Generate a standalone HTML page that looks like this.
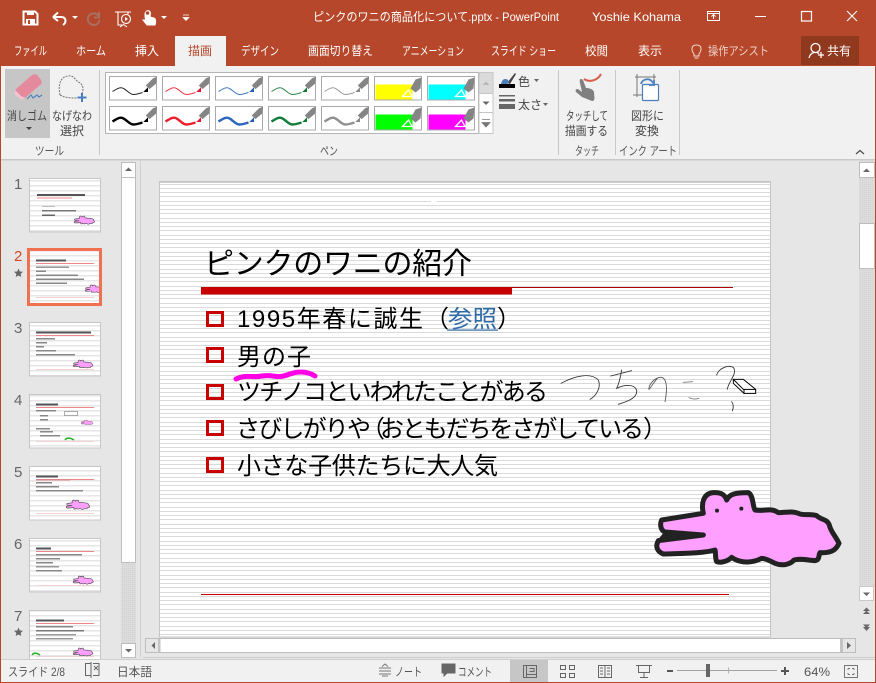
<!DOCTYPE html>
<html lang="ja"><head><meta charset="utf-8"><title>PowerPoint</title>
<style>
html,body{margin:0;padding:0;width:876px;height:683px;overflow:hidden;background:#e6e6e6}
svg{display:block}
text{font-family:"Liberation Sans","Noto Sans CJK JP",sans-serif;white-space:pre}
.w{fill:#fff;font-size:12px}
.r{fill:#444;font-size:12px}
.s{fill:#555;font-size:12px}
.n{fill:#666;font-size:15px}
.b{fill:#000;font-size:24px}
</style></head><body>
<svg width="876" height="683" viewBox="0 0 876 683" xmlns="http://www.w3.org/2000/svg">
<defs>
<pattern id="st" width="6" height="17" patternUnits="userSpaceOnUse" y="184"><rect width="6" height="17" fill="#fff"/><rect y="0" width="6" height="1" fill="#dadada"/><rect y="4" width="6" height="1" fill="#dadada"/><rect y="8" width="6" height="1" fill="#dadada"/><rect y="12" width="6" height="1" fill="#dadada"/></pattern>
<pattern id="st2" width="4" height="5" patternUnits="userSpaceOnUse"><rect width="4" height="5" fill="#fff"/><rect width="4" height="1.500" fill="#e6e6e6"/></pattern>
<pattern id="dit" width="2" height="2" patternUnits="userSpaceOnUse"><rect width="2" height="2" fill="#dcdcdc"/><rect width="1" height="1" fill="#d2d2d2"/></pattern>
<clipPath id="c2"><rect x="30" y="251" width="69" height="52"/></clipPath>
<g id="body"><path d="M37 9L44 2L47 1L46 7L40 12Z" fill="#858585" stroke="#858585"/></g>
<g id="hbody"><path d="M36 12L41 3L47 1L46 12L41 16Z" fill="#858585"/></g>
<rect id="cell" width="47" height="23.500" fill="#fff" stroke="#a9a9a9" x="0" y="0"/>
<path id="wave" d="M3 15C8 12 11 10 14 12C18 14 20 18 24 18C27 18 30 17 33 16" fill="none"/>
<path id="croc" d="M365 510L490 490C483 460 490 430 520 428C545 426 555 435 560 450C568 432 585 428 625 428C640 435 638 470 645 480C670 485 695 472 715 488C740 488 755 482 775 490C790 498 815 490 830 497C845 512 860 505 868 525C872 545 885 555 897 580C890 595 880 610 840 608C835 615 840 630 825 632C800 630 780 625 762 630C750 645 725 648 705 640C690 632 675 625 665 625C640 638 610 640 585 628L575 622C565 632 545 640 530 635C525 625 528 610 525 600C490 610 430 610 370 612C352 605 345 590 355 572L490 555L375 546C360 540 360 520 365 510Z"/>
</defs>

<!-- base -->
<rect width="876" height="683" fill="#e6e6e6"/>
<rect width="876" height="66" fill="#b7472a"/>
<rect x="0" y="66" width="876" height="93" fill="#f1f1f1"/>
<rect x="0" y="159" width="876" height="1.500" fill="#c9c9c9"/>

<!-- QAT -->
<g>
<path d="M23.500 11.500H35L37.500 14V24.500H23.500Z" fill="none" stroke="#fff" stroke-width="2"/>
<rect x="27" y="11" width="7" height="4" fill="#fff"/><rect x="26" y="19" width="9" height="6" fill="#fff"/><rect x="28" y="20" width="2" height="4" fill="#b7472a"/>
<path d="M53 17L58 12.500M53 17L58 21M53 17H61C66 17 67 22 63 25" fill="none" stroke="#fff" stroke-width="2"/>
<path d="M72 16H78L75 19Z" fill="#fff"/>
<path d="M99 12V17.500H94M98 15.500C95 12 89 13 88 18C87 22 91 25 94 25C97 25 99 23 99.500 20" fill="none" stroke="#a8705f" stroke-width="2"/>
<path d="M115 12H131M118 12V25H122M128 12V14" stroke="#fff" stroke-width="1.100" fill="none"/><circle cx="126" cy="19" r="4.500" fill="none" stroke="#fff" stroke-width="1.100"/><path d="M125 17L128 19L125 21Z" fill="#fff"/><path d="M120 27L123.500 24.500L127 27" stroke="#fff" fill="none"/>
<path d="M145 16C144 10 150 9 150.500 13L150 17L154 18C156 19 156 22 155 25H147L143 20L145.500 20Z" fill="#fff" stroke="#fff"/><circle cx="147.500" cy="13" r="1.800" fill="#b7472a"/>
<path d="M161 16H167L164 19Z" fill="#fff"/>
<path d="M183 15H189M183 17.500H189L186 20.500Z" fill="#fff" stroke="#fff" stroke-width=".7"/>
</g>
<text class="w" x="313" y="21" textLength="246" lengthAdjust="spacingAndGlyphs">ピンクのワニの商品化について.pptx - PowerPoint</text>
<text class="w" x="592" y="21" textLength="89" lengthAdjust="spacingAndGlyphs">Yoshie Kohama</text>
<g fill="none" stroke="#fff">
<rect x="707.500" y="11.500" width="12" height="9"/><path d="M707 13.500H720M713.500 19V15M711.500 16.500L713.500 14.500L715.500 16.500"/>
<path d="M755 16.500H766"/><rect x="801.500" y="11.500" width="10" height="9.500" stroke-width="1.200"/><path d="M847 11L857 21M857 11L847 21" stroke-width="1.100"/>
</g>

<!-- Tabs -->
<rect x="175" y="36" width="51" height="30" fill="#f1f1f1"/>
<rect x="801" y="36" width="58" height="29" fill="#90391f"/>
<g class="tabs">
<text class="w" x="14" y="55" textLength="33" lengthAdjust="spacingAndGlyphs">ファイル</text>
<text class="w" x="76" y="55" textLength="30" lengthAdjust="spacingAndGlyphs">ホーム</text>
<text class="w" x="135" y="55" textLength="24" lengthAdjust="spacingAndGlyphs">挿入</text>
<text x="188" y="55" font-size="12" fill="#b7472a" textLength="24" lengthAdjust="spacingAndGlyphs">描画</text>
<text class="w" x="241" y="55" textLength="38" lengthAdjust="spacingAndGlyphs">デザイン</text>
<text class="w" x="308" y="55" textLength="65" lengthAdjust="spacingAndGlyphs">画面切り替え</text>
<text class="w" x="402" y="55" textLength="62" lengthAdjust="spacingAndGlyphs">アニメーション</text>
<text class="w" x="491" y="55" textLength="65" lengthAdjust="spacingAndGlyphs">スライド ショー</text>
<text class="w" x="585" y="55" textLength="23" lengthAdjust="spacingAndGlyphs">校閲</text>
<text class="w" x="638" y="55" textLength="24" lengthAdjust="spacingAndGlyphs">表示</text>
<text x="708" y="55" font-size="12" fill="#ecd0c6" textLength="61" lengthAdjust="spacingAndGlyphs">操作アシスト</text>
<text class="w" x="827" y="55" textLength="24" lengthAdjust="spacingAndGlyphs">共有</text>
</g>
<path d="M694 54C691 50 691 45 696.500 45C702 45 702 50 699 54V56H694ZM694.500 58H698.500" fill="none" stroke="#f0dcd5"/>
<circle cx="815.500" cy="48" r="4.500" fill="none" stroke="#fff" stroke-width="1.300"/><path d="M809 58C810 54 812 53 814 52.500M817 52.500L819 53.500M818 55H824M821 52V58" fill="none" stroke="#fff" stroke-width="1.300"/>

<!-- Ribbon: tools -->
<rect x="5" y="69" width="45" height="69" fill="#c6c6c6"/>
<g>
<path d="M15 90L32 75C34 74 37 74 38 76L41 80C42 82 42 84 40 85L25 98L21 96Z" fill="#e58a9c"/>
<path d="M15 90L21 96L25 98L22 100L15 95Z" fill="#f2c4cd"/>
<path d="M27 99L31 95L33 98L37 95L39 97L42 95" fill="none" stroke="#4a7fbd" stroke-width="1.100"/>
</g>
<text class="r" x="7" y="120" textLength="40" lengthAdjust="spacingAndGlyphs">消しゴム</text>
<path d="M26 127H32L29 130Z" fill="#444"/>
<path d="M60 95C58 85 60 77 68 76C73 75 75 79 78 82C84 84 84 91 81 95" fill="none" stroke="#777" stroke-dasharray="2 1"/>
<path d="M60 95C66 98 70 98 77 98" fill="none" stroke="#777" stroke-dasharray="2 1"/>
<path d="M82 93V102M77.500 97.500H86.500" stroke="#4a7fbd" stroke-width="2"/>
<text class="r" x="52" y="120" textLength="40" lengthAdjust="spacingAndGlyphs">なげなわ</text>
<text class="r" x="60" y="135" textLength="24" lengthAdjust="spacingAndGlyphs">選択</text>
<text class="s" x="35" y="155" textLength="29" lengthAdjust="spacingAndGlyphs">ツール</text>
<g fill="#c8c8c8"><rect x="99" y="70" width="1" height="85"/><rect x="558" y="70" width="1" height="85"/><rect x="615" y="70" width="1" height="85"/><rect x="679" y="70" width="1" height="85"/></g>

<!-- Pen gallery -->
<rect x="105.500" y="72.500" width="373" height="61" fill="#fff" stroke="#b4b4b4"/>
<g transform="translate(109.500 76.500)"><use href="#cell"/><use href="#wave" stroke="#222" stroke-width="1"/><use href="#body"/><path d="M35 15L38 12L38 15Z" fill="#000" stroke="#000"/></g>
<g transform="translate(162.500 76.500)"><use href="#cell"/><use href="#wave" stroke="#ee3340" stroke-width="1"/><use href="#body"/><path d="M35 15L38 12L38 15Z" fill="#e8112d" stroke="#e8112d"/></g>
<g transform="translate(215.500 76.500)"><use href="#cell"/><use href="#wave" stroke="#3f76c2" stroke-width="1"/><use href="#body"/><path d="M35 15L38 12L38 15Z" fill="#1f5fbf" stroke="#1f5fbf"/></g>
<g transform="translate(268.500 76.500)"><use href="#cell"/><use href="#wave" stroke="#2a8a4c" stroke-width="1"/><use href="#body"/><path d="M35 15L38 12L38 15Z" fill="#107c38" stroke="#107c38"/></g>
<g transform="translate(321.500 76.500)"><use href="#cell"/><use href="#wave" stroke="#999" stroke-width="1"/><use href="#body"/><path d="M35 15L38 12L38 15Z" fill="#888" stroke="#888"/></g>
<g transform="translate(374.500 76.500)"><use href="#cell"/><rect x="1" y="8" width="37" height="15" fill="#ff0"/><use href="#hbody"/><path d="M28 20L34 13.500L37.500 20Z" fill="none" stroke="#fff" stroke-width="1.300"/></g>
<g transform="translate(427.500 76.500)"><use href="#cell"/><rect x="1" y="8" width="37" height="15" fill="#0ff"/><use href="#hbody"/><path d="M28 20L34 13.500L37.500 20Z" fill="none" stroke="#fff" stroke-width="1.300"/></g>

<g transform="translate(109.500 106.500)"><use href="#cell"/><use href="#wave" stroke="#000" stroke-width="2.400"/><use href="#body"/><path d="M35 15L38 12L38 15Z" fill="#000" stroke="#000"/></g>
<g transform="translate(162.500 106.500)"><use href="#cell"/><use href="#wave" stroke="#f01c2c" stroke-width="2.400"/><use href="#body"/><path d="M35 15L38 12L38 15Z" fill="#e8112d" stroke="#e8112d"/></g>
<g transform="translate(215.500 106.500)"><use href="#cell"/><use href="#wave" stroke="#2a66c0" stroke-width="2.400"/><use href="#body"/><path d="M35 15L38 12L38 15Z" fill="#1f5fbf" stroke="#1f5fbf"/></g>
<g transform="translate(268.500 106.500)"><use href="#cell"/><use href="#wave" stroke="#107c38" stroke-width="2.400"/><use href="#body"/><path d="M35 15L38 12L38 15Z" fill="#107c38" stroke="#107c38"/></g>
<g transform="translate(321.500 106.500)"><use href="#cell"/><use href="#wave" stroke="#8f8f8f" stroke-width="2.400"/><use href="#body"/><path d="M35 15L38 12L38 15Z" fill="#888" stroke="#888"/></g>
<g transform="translate(374.500 106.500)"><use href="#cell"/><rect x="1" y="8" width="37" height="15" fill="#0f0"/><use href="#hbody"/><path d="M28 20L34 13.500L37.500 20Z" fill="none" stroke="#fff" stroke-width="1.300"/></g>
<g transform="translate(427.500 106.500)"><use href="#cell"/><rect x="1" y="8" width="37" height="15" fill="#f0f"/><use href="#hbody"/><path d="M28 20L34 13.500L37.500 20Z" fill="none" stroke="#fff" stroke-width="1.300"/></g>

<!-- gallery scroll -->
<rect x="479" y="72.500" width="14" height="61" fill="#fff" stroke="#c6c6c6"/>
<rect x="479.500" y="73" width="13" height="20" fill="#dadada"/>
<path d="M479 93.500H493M479 112.500H493" stroke="#c6c6c6"/>
<path d="M482.500 85H489.500L486 81.500Z" fill="#b8b8b8"/>
<path d="M482.500 101.500H489.500L486 105Z" fill="#666"/>
<path d="M482 119.500H490M482 122.500H490L486 127Z" stroke="#777" fill="#777" stroke-width=".8"/>
<text class="s" x="320" y="155" textLength="18" lengthAdjust="spacingAndGlyphs">ペン</text>

<!-- colour & thickness -->
<path d="M507 83L515 73L516 74L510 84Z" fill="#444"/><path d="M501 84C502 79 505 78 508 80L509 83L505 85Z" fill="#4a7fbd"/>
<rect x="499" y="84" width="16" height="4" fill="#000"/>
<text class="r" x="518" y="86" textLength="12" lengthAdjust="spacingAndGlyphs">色</text>
<path d="M534 79H539L536.500 82Z" fill="#666"/>
<rect x="499" y="95" width="16" height="1.500" fill="#666"/><rect x="499" y="99" width="16" height="2.500" fill="#666"/><rect x="499" y="104" width="16" height="5" fill="#666"/>
<text class="r" x="518" y="109" textLength="24" lengthAdjust="spacingAndGlyphs">太さ</text>
<path d="M543 103H548L545.500 106Z" fill="#666"/>

<!-- touch -->
<path d="M584 79C590 83 598 80 601 74" fill="none" stroke="#d8604a" stroke-width="2"/>
<path d="M576 92L582 97L592 101C596 101 594 96 594 92C593 89 589 88 586 88L583 80C581 78 579 79 580 83L582 92L578 89C576 89 575 90 576 92Z" fill="#7f7f7f"/>
<text class="r" x="566" y="120" textLength="42" lengthAdjust="spacingAndGlyphs">タッチして</text>
<text class="r" x="565" y="135" textLength="43" lengthAdjust="spacingAndGlyphs">描画する</text>
<text class="s" x="575" y="155" textLength="24" lengthAdjust="spacingAndGlyphs">タッチ</text>

<!-- convert -->
<path d="M635 77H656M635 95H644M637 74V97M654 74V80M633 95H640" stroke="#777" fill="none"/>
<rect x="642.500" y="84.500" width="16" height="16" rx="1" fill="#fff" stroke="#4a7fbd" stroke-width="1.200"/>
<path d="M641 84C642 79 650 77 653 83M654 80L654 85H649" fill="none" stroke="#4a7fbd" stroke-width="1.800"/>
<text class="r" x="631" y="120" textLength="33" lengthAdjust="spacingAndGlyphs">図形に</text>
<text class="r" x="635" y="135" textLength="24" lengthAdjust="spacingAndGlyphs">変換</text>
<text class="s" x="619" y="155" textLength="58" lengthAdjust="spacingAndGlyphs">インク アート</text>
<path d="M856 154L860 150.500L864 154" fill="none" stroke="#555" stroke-width="1.400"/>

<!-- window border -->
<rect x="0" y="0" width="1" height="683" fill="#b7472a"/><rect x="875" y="0" width="1" height="683" fill="#b7472a"/><rect y="682" width="876" height="1" fill="#b7472a"/>

<!-- thumb panel -->
<rect x="140" y="160" width="1" height="497" fill="#cfcfcf"/>
<text class="n" x="14" y="189">1</text>
<text x="14" y="261" font-size="15" fill="#d24726">2</text>
<text class="n" x="14" y="333">3</text>
<text class="n" x="14" y="405">4</text>
<text class="n" x="14" y="477">5</text>
<text class="n" x="14" y="549">6</text>
<text class="n" x="14" y="621">7</text>
<path d="M18.500 268.500L19.800 271.500L23 271.800L20.600 274L21.300 277L18.500 275.500L15.700 277L16.400 274L14 271.800L17.200 271.500Z" fill="#666"/>
<path d="M18.500 627.500L19.800 630.500L23 630.800L20.600 633L21.300 636L18.500 634.500L15.700 636L16.400 633L14 630.800L17.200 630.500Z" fill="#666"/>

<!-- thumbs -->
<g stroke="none">
<rect x="29.500" y="178.500" width="71" height="53.500" fill="url(#st2)" stroke="#c6c6c6"/>
<rect x="37" y="194" width="48" height="2" fill="#555"/><rect x="37" y="197.500" width="35" height="1" fill="#e88"/>
<rect x="42" y="206" width="13" height="1" fill="#bbb"/><rect x="42" y="210" width="34" height="1.500" fill="#777"/><rect x="42" y="214.500" width="13" height="1.500" fill="#666"/>
<use href="#croc" transform="translate(61 200) scale(.0375)" fill="#ff9fff" stroke="#555" stroke-width="18"/>

<rect x="28.500" y="249.500" width="72" height="55" fill="url(#st2)" stroke="#f0704f" stroke-width="3"/>
<rect x="36" y="259.500" width="30" height="2" fill="#555"/><rect x="36" y="263" width="58" height="1" fill="#e88"/>
<rect x="36" y="266.500" width="33" height="1.500" fill="#999"/><rect x="36" y="270.500" width="10" height="1.500" fill="#888"/><rect x="36" y="274.500" width="42" height="1.500" fill="#888"/><rect x="36" y="278.500" width="48" height="1.500" fill="#888"/><rect x="36" y="282.500" width="31" height="1.500" fill="#888"/>
<rect x="36" y="297" width="58" height="1" fill="#f8d0d4"/>
<g clip-path="url(#c2)"><use href="#croc" transform="translate(73 270) scale(.035)" fill="#ff9fff" stroke="#555" stroke-width="18"/></g>

<rect x="29.500" y="322.500" width="71" height="53.500" fill="url(#st2)" stroke="#c6c6c6"/>
<rect x="36" y="331.500" width="55" height="2" fill="#555"/><rect x="36" y="335" width="58" height="1" fill="#e88"/>
<rect x="36" y="338" width="19" height="1.500" fill="#888"/><rect x="36" y="342" width="11" height="1.500" fill="#888"/><rect x="36" y="346" width="8" height="1.500" fill="#888"/><rect x="36" y="350" width="20" height="1.500" fill="#888"/><rect x="36" y="354" width="39" height="1.500" fill="#888"/>
<rect x="36" y="369" width="58" height="1" fill="#f8d0d4"/>
<use href="#croc" transform="translate(60.600 344.700) scale(.036)" fill="#ff9fff" stroke="#555" stroke-width="18"/>

<rect x="29.500" y="394.500" width="71" height="53.500" fill="url(#st2)" stroke="#c6c6c6"/>
<rect x="36" y="403.500" width="22" height="2" fill="#555"/><rect x="36" y="407" width="58" height="1" fill="#e88"/>
<rect x="36" y="410" width="20" height="1.500" fill="#888"/><rect x="40" y="415" width="8" height="1.500" fill="#888"/><rect x="40" y="419" width="8" height="1.500" fill="#888"/><rect x="36" y="428" width="14" height="1.500" fill="#888"/><rect x="40" y="431" width="13" height="1.500" fill="#888"/><rect x="40" y="435" width="20" height="1.500" fill="#888"/>
<rect x="64.500" y="411.500" width="13" height="4" fill="#fff" stroke="#777" stroke-width=".6"/>
<rect x="36" y="441" width="58" height="1" fill="#f8d0d4"/>
<use href="#croc" transform="translate(73.400 410.600) scale(.022)" fill="#ff9fff" stroke="#666" stroke-width="20"/>
<path d="M65 440C67 437 71 438 74 440" stroke="#20b020" stroke-width="1.500" fill="none"/>

<rect x="29.500" y="466.500" width="71" height="53.500" fill="url(#st2)" stroke="#c6c6c6"/>
<rect x="36" y="475.500" width="22" height="2" fill="#555"/><rect x="36" y="479" width="34" height="1.500" fill="#d88"/><rect x="70" y="479" width="24" height="1" fill="#e88"/>
<rect x="36" y="482" width="16" height="1.500" fill="#888"/><rect x="36" y="486" width="23" height="1.500" fill="#888"/><rect x="36" y="490" width="47" height="1.500" fill="#888"/>
<rect x="36" y="513" width="58" height="1" fill="#f8d0d4"/>
<use href="#croc" transform="translate(51.200 481.700) scale(.043)" fill="#ff9fff" stroke="#555" stroke-width="16"/>

<rect x="29.500" y="538.500" width="71" height="53.500" fill="url(#st2)" stroke="#c6c6c6"/>
<rect x="36" y="547.500" width="15" height="2" fill="#555"/><rect x="36" y="551" width="58" height="1" fill="#e88"/>
<rect x="36" y="554" width="46" height="1.500" fill="#888"/><rect x="36" y="558" width="24" height="1.500" fill="#888"/><rect x="36" y="562" width="17" height="1.500" fill="#888"/><rect x="36" y="566" width="23" height="1.500" fill="#999"/><rect x="36" y="570" width="26" height="1.500" fill="#888"/>
<rect x="36" y="585" width="58" height="1" fill="#f8d0d4"/>
<use href="#croc" transform="translate(60.200 560.300) scale(.037)" fill="#ff9fff" stroke="#555" stroke-width="18"/>

<rect x="29.500" y="610.500" width="71" height="49" fill="url(#st2)" stroke="#c6c6c6"/>
<rect x="36" y="619.500" width="28" height="2" fill="#555"/><rect x="36" y="623" width="58" height="1" fill="#e88"/>
<rect x="36" y="626" width="37" height="1.500" fill="#888"/><rect x="36" y="630" width="48" height="1.500" fill="#777"/><rect x="36" y="634" width="40" height="1.500" fill="#999"/><rect x="36" y="638" width="37" height="1.500" fill="#999"/>
<rect x="36" y="656" width="58" height="1" fill="#f8d0d4"/>
<use href="#croc" transform="translate(60.600 632.700) scale(.036)" fill="#ff9fff" stroke="#555" stroke-width="18"/>
<path d="M32 655C34 652 37 653 40 655" stroke="#20b020" stroke-width="1.500" fill="none"/>
</g>
<rect y="660" x="1" width="874" height="22" fill="#f1f1f1"/>
<rect y="659" x="1" width="874" height="1" fill="#cfcfcf"/>

<!-- thumb scrollbar -->
<rect x="121" y="562" width="15" height="82" fill="url(#dit)"/>
<rect x="121.500" y="162.500" width="14" height="15" fill="#fff" stroke="#bdbdbd"/>
<rect x="121.500" y="177.500" width="14" height="385" fill="#fff" stroke="#bdbdbd"/>
<rect x="121.500" y="643.500" width="14" height="14" fill="#fff" stroke="#bdbdbd"/>
<path d="M125 171H132L128.500 167.500Z" fill="#666"/><path d="M125 649H132L128.500 652.500Z" fill="#666"/>

<!-- slide -->
<rect x="159.500" y="181.500" width="611" height="455.500" fill="url(#st)" stroke="#c4c4c4"/>
<rect x="160" y="182" width="610" height="1" fill="#d0d0d0"/>
<text x="204" y="274" font-size="30" fill="#000" textLength="268" lengthAdjust="spacing">ピンクのワニの紹介</text>
<rect x="201" y="287" width="311" height="7.500" fill="#c80000"/>
<rect x="512" y="287" width="221" height="1" fill="#b00000"/>
<rect x="201" y="594" width="528" height="1" fill="#d00000"/>
<g fill="none" stroke="#c80000" stroke-width="3">
<rect x="207.500" y="312.500" width="15" height="13"/>
<rect x="207.500" y="348.500" width="15" height="13"/>
<rect x="207.500" y="385.500" width="15" height="13"/>
<rect x="207.500" y="421.500" width="15" height="13"/>
<rect x="207.500" y="458.500" width="15" height="13"/>
</g>
<text class="b" x="237" y="327" textLength="186" lengthAdjust="spacing">1995年春に誠生</text>
<text class="b" x="425" y="327">（</text>
<text class="b" x="448" y="327" fill="#2e6aa6" style="fill:#2e6aa6" textLength="49" lengthAdjust="spacingAndGlyphs">参照</text>
<text class="b" x="497" y="327">）</text>
<rect x="447" y="329.500" width="51" height="1.200" fill="#2e6aa6"/>
<text class="b" x="237" y="365" textLength="74" lengthAdjust="spacing">男の子</text>
<text class="b" x="237" y="400" textLength="311" lengthAdjust="spacing">ツチノコといわれたことがある</text>
<text class="b" x="236" y="437" textLength="135" lengthAdjust="spacing">さびしがりや</text>
<text class="b" x="361" y="437">（</text>
<text class="b" x="380" y="437" textLength="264" lengthAdjust="spacing">おともだちをさがしている</text>
<text class="b" x="643" y="437">）</text>
<text class="b" x="237" y="474" textLength="261" lengthAdjust="spacing">小さな子供たちに大人気</text>
<path d="M236 379C246 374 253 378 262 376C273 374 277 379 287 375C297 371 307 371 315 376" fill="none" stroke="#ff00e6" stroke-width="5" stroke-linecap="round"/>

<!-- handwriting -->
<g transform="translate(540 350) scale(.33333)" fill="none" stroke="#333" stroke-width="2.600" stroke-linecap="round">
<path d="M63 100C100 80 150 65 175 90C185 115 165 140 150 148"/>
<path d="M212 78L275 62M245 60C240 90 235 105 230 115C260 100 290 105 290 125C290 145 260 155 235 163"/>
<path d="M352 85C340 100 330 115 327 118C325 105 345 80 365 82C385 88 380 130 375 155" stroke="#555"/>
<path d="M430 97L458 95M447 143C455 148 468 148 477 145" stroke="#777"/>
<path d="M530 75C535 55 570 40 582 55C590 75 565 95 562 118"/>
<path d="M575 155C582 165 580 175 577 182"/>
<path d="M580 88L610 88L647 118V130H612L580 100Z" fill="#fff" stroke="#000" stroke-width="3"/>
<path d="M612 130V118H647M610 118L580 88" stroke="#000" stroke-width="3"/>
</g>
<!-- croc -->
<g transform="translate(540 350) scale(.33333)">
<use href="#croc" fill="#ff9fff" stroke="#222" stroke-width="15" stroke-linejoin="round"/>
<path d="M372 546L490 553L352 572Z" fill="#222"/>
<circle cx="531" cy="482" r="6" fill="#222"/><circle cx="604" cy="476" r="6" fill="#222"/>
</g>
<rect x="431" y="201" width="6" height="3" fill="#fff"/><rect x="736" y="274" width="14" height="3" fill="#fff"/>

<!-- right scrollbar -->
<rect x="859" y="160" width="16" height="427" fill="url(#dit)"/>
<rect x="859.500" y="162.500" width="15" height="15" fill="#fff" stroke="#bdbdbd"/>
<path d="M863 172H870L866.500 168.500Z" fill="#666"/>
<rect x="859.500" y="223.500" width="15" height="45" fill="#fff" stroke="#bdbdbd"/>
<rect x="859.500" y="586.500" width="14" height="14" fill="#fff" stroke="#c8c8c8"/>
<path d="M863 592.500H870L866.500 596Z" fill="#666"/>
<path d="M863 611H870L866.500 607.500ZM863 614H870L866.500 610.500Z" fill="#666"/>
<path d="M863 624H870M863 627H870L866.500 631ZM863 624.500H870L866.500 628Z" fill="#666" stroke="none"/>

<!-- horizontal scrollbar -->
<rect x="145.500" y="638.500" width="710" height="14" fill="#fff" stroke="#bdbdbd"/>
<rect x="146" y="639" width="12" height="13" fill="#e6e6e6"/><rect x="158" y="639" width="2.500" height="13" fill="#c4c4c4"/>
<rect x="843" y="639" width="12" height="13" fill="#e6e6e6"/><rect x="840" y="639" width="3" height="13" fill="#c4c4c4"/>
<path d="M155 642V649L151.500 645.500Z" fill="#666"/><path d="M847 642V649L851 645.500Z" fill="#666"/>
<rect x="143" y="657" width="732" height="1" fill="#cfcfcf"/>

<!-- status bar -->
<text class="s" x="8" y="676" textLength="57" lengthAdjust="spacingAndGlyphs">スライド 2/8</text>
<path d="M91 663.500H85.500V675.500H91M91 662V678M93 663.500H99V675.500H93" fill="none" stroke="#666"/><path d="M94 666L98 670M98 666L94 670" stroke="#666"/>
<text class="s" x="117" y="676" textLength="35" lengthAdjust="spacingAndGlyphs">日本語</text>
<path d="M379 668H391M379 671H391M379 674H391M382 676H388M382 666.500L385 664L388 666.500" fill="none" stroke="#777"/>
<text class="s" x="395" y="676" textLength="27" lengthAdjust="spacingAndGlyphs">ノート</text>
<path d="M442 664H455V673H447L444 676V673H442Z" fill="#666" stroke="#666"/>
<text class="s" x="458" y="676" textLength="34" lengthAdjust="spacingAndGlyphs">コメント</text>
<rect x="510" y="660" width="38" height="22" fill="#c6c6c6"/>
<g fill="none" stroke="#666">
<rect x="523.500" y="665.500" width="13" height="12"/><path d="M526.500 665.500V677.500M529.500 668.500H534V671.500H529.500M526.500 674.500H536.500"/>
<rect x="560.500" y="665.500" width="5" height="4"/><rect x="569.500" y="665.500" width="5" height="4"/><rect x="560.500" y="673.500" width="5" height="4"/><rect x="569.500" y="673.500" width="5" height="4"/>
<path d="M598.500 665.500H605V677.500H598.500ZM605 665.500H611.500V677.500H605M600 668H603M600 671H603M600 674H603M607 668H610M607 671H610M607 674H610"/>
<path d="M636 665.500H652M638.500 665.500V672.500H649.500V665.500M644 672.500V677.500M640 677.500H648"/>
</g>
<rect x="667" y="670" width="6" height="2" fill="#555"/>
<rect x="677" y="670" width="100" height="1" fill="#a0a0a0"/>
<rect x="728" y="667.500" width="1" height="6" fill="#b0b0b0"/>
<rect x="706" y="664" width="4" height="13" fill="#666"/>
<path d="M785 667V675M781 671H789" stroke="#555" stroke-width="2"/>
<text class="s" x="804" y="676" textLength="26" lengthAdjust="spacingAndGlyphs">64%</text>
<rect x="844.500" y="665.500" width="13" height="12" fill="none" stroke="#777"/>
<path d="M848 668.500H850M848 668.500V670M854 668.500H852M854 668.500V670M848 674.500H850M848 674.500V673M854 674.500H852M854 674.500V673" stroke="#777" fill="none"/>
</svg>
</body></html>
